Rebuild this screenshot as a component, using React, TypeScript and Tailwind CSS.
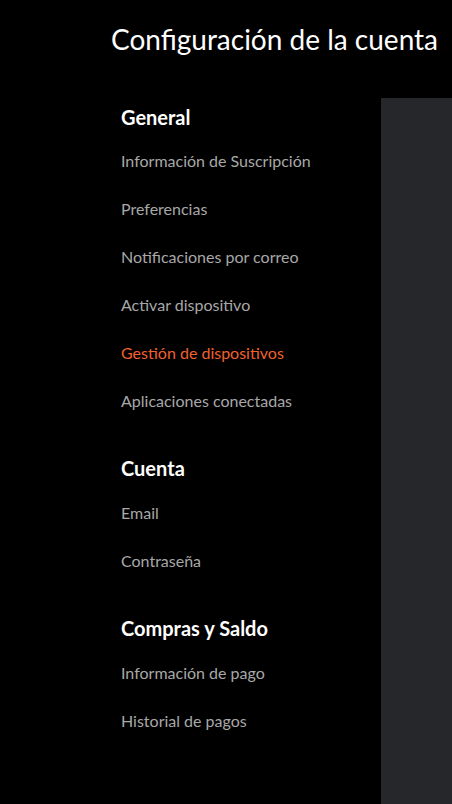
import React from "react";

const sections = [
  {
    title: "General",
    items: [
      "Información de Suscripción",
      "Preferencias",
      "Notificaciones por correo",
      "Activar dispositivo",
      "Gestión de dispositivos",
      "Aplicaciones conectadas",
    ],
  },
  { title: "Cuenta", items: ["Email", "Contraseña"] },
  { title: "Compras y Saldo", items: ["Información de pago", "Historial de pagos"] },
];

const active = "Gestión de dispositivos";

export default function App() {
  return (
    <div className="min-h-[804px] w-full bg-black font-['Lato',sans-serif] flex flex-col overflow-hidden">
      <header className="h-[98px] pl-[111px] pt-[22px]">
        <h1 className="text-[28px] leading-[34px] text-white whitespace-nowrap">
          Configuración de la cuenta
        </h1>
      </header>
      <div className="flex flex-1">
        <nav className="w-[381px] shrink-0 pl-[121px] pt-[5px]">
          {sections.map((s, i) => (
            <div key={s.title} className={i > 0 ? "mt-[29px]" : ""}>
              <h2
                className={
                  "text-[20px] leading-[28px] font-bold text-white " +
                  (i > 0 ? "mb-[7px]" : "mb-[6px]")
                }
              >
                {s.title}
              </h2>
              <ul>
                {s.items.map((item) => (
                  <li
                    key={item}
                    className={
                      "h-12 flex items-center text-[16px] whitespace-nowrap " +
                      (item === active ? "text-[#f0612e]" : "text-[#a8a8a8]")
                    }
                  >
                    {item}
                  </li>
                ))}
              </ul>
            </div>
          ))}
        </nav>
        <main className="flex-1 bg-[#26272b]" />
      </div>
    </div>
  );
}
